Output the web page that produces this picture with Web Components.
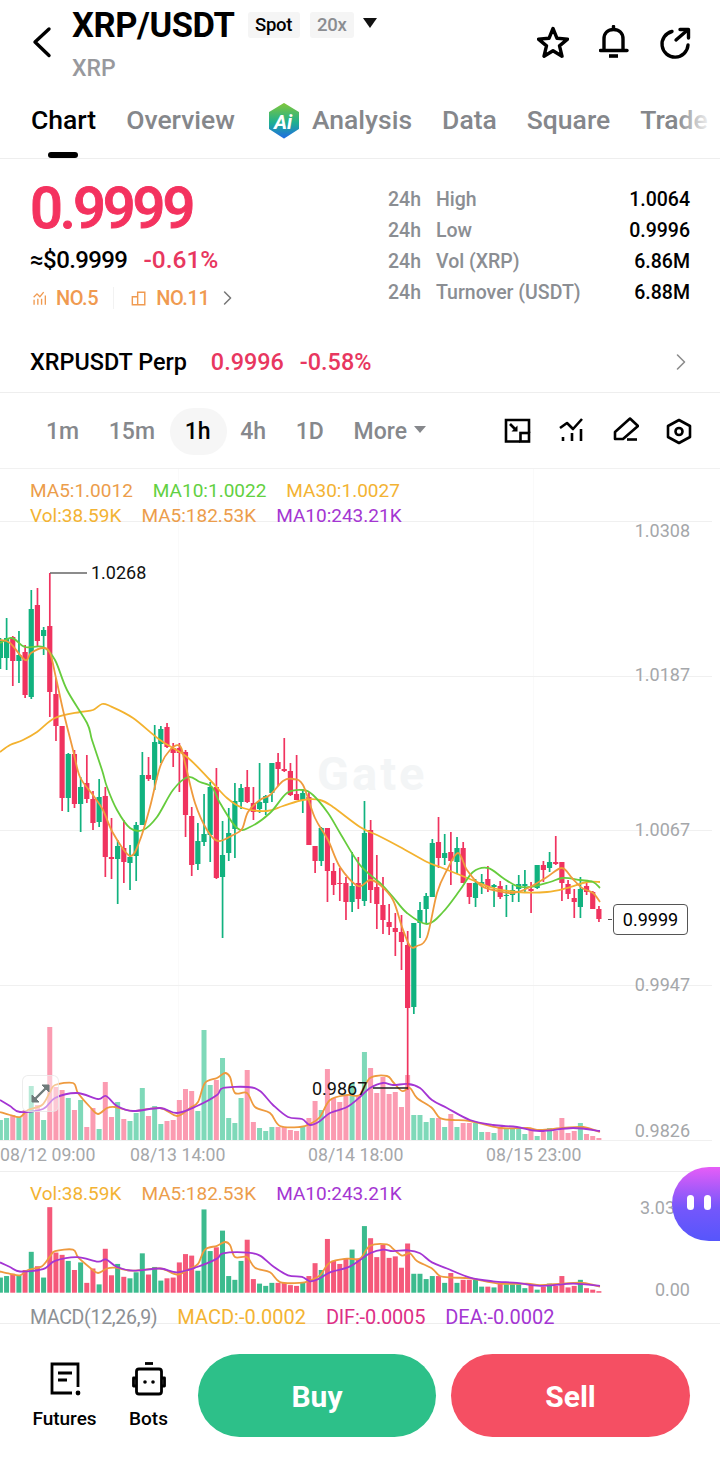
<!DOCTYPE html>
<html lang="en">
<head>
<meta charset="utf-8">
<title>XRP/USDT</title>
<style>
  html, body { margin: 0; padding: 0; background: #fff; }
  body { width: 720px; height: 1467px; overflow: hidden; font-family: Roboto, "Noto Sans", sans-serif; color: #000; position: relative; }
</style>
</head>
<body>
<app-header></app-header>
<tab-bar></tab-bar>
<price-panel></price-panel>
<perp-row></perp-row>
<time-bar></time-bar>
<kline-main></kline-main>
<kline-sub></kline-sub>
<bottom-bar></bottom-bar>
<chat-bubble></chat-bubble>

<script>
// Candles read off the reference: colour, wick top, body top, body bottom, wick bottom (page y)
const CANDLES = `g 638 640 658 669|g 618 638 658 670|r 636 637 661 686|g 631 655 661 683|r 645 652 695 698|g 590 609 697 699|r 588 605 641 647|g 627 630 636 655|r 573 626 692 717|r 678 694 726 741|r 726 726 798 811|g 753 754 798 812|r 750 754 804 808|g 777 787 804 832|r 755 783 799 803|r 791 799 823 830|g 779 797 822 827|r 787 796 857 877|r 818 857 859 879|g 840 846 859 904|r 820 848 862 883|g 845 857 863 890|g 822 825 856 881|g 752 775 825 825|r 757 775 779 781|g 725 742 780 790|g 726 729 744 763|r 723 727 747 748|r 743 748 753 767|r 743 748 753 792|r 750 752 815 837|r 807 816 865 876|g 823 841 864 870|g 794 834 842 846|g 782 787 835 862|r 768 787 878 879|g 821 855 877 938|g 808 833 853 861|g 783 801 829 858|g 784 788 802 809|r 770 787 802 803|r 787 803 812 820|g 763 802 809 813|g 795 796 803 815|g 763 763 793 802|r 753 762 769 786|r 738 769 771 772|r 763 771 795 796|r 755 794 800 800|g 790 793 800 813|r 792 797 845 845|r 846 846 861 873|g 827 828 861 866|r 828 828 871 902|r 863 871 885 895|r 868 883 884 901|r 877 883 902 920|g 852 886 902 912|r 857 883 899 909|g 801 833 901 906|r 820 830 890 903|r 855 887 904 929|r 877 905 920 934|r 904 922 927 935|r 913 928 932 956|r 915 932 942 970|r 931 945 1008 1090|g 923 923 1007 1014|g 902 910 923 938|g 893 896 909 923|g 839 843 897 897|r 817 842 858 868|g 834 853 858 865|r 832 852 861 885|g 837 848 862 874|r 842 848 883 883|r 883 883 897 904|g 879 883 898 907|g 874 882 885 894|r 866 879 887 892|g 884 885 887 907|r 881 886 897 899|g 885 895 896 917|g 885 890 895 902|g 875 884 889 902|g 870 884 886 893|r 882 889 891 913|g 865 865 888 889|r 861 865 870 882|g 852 862 868 872|r 836 862 864 865|r 862 862 883 901|r 880 884 894 899|r 889 898 902 918|g 877 889 907 918|r 880 886 892 895|r 891 892 909 909|r 906 909 919 922`
  .split('|').map(s => { const [c, ...v] = s.split(' '); return { c, wt: +v[0], bt: +v[1], bb: +v[2], wb: +v[3] }; });

const VOLUMES = [20,22,25,23,30,54,35,20,113,53,50,42,30,40,13,32,11,58,23,38,21,19,27,52,24,34,16,19,20,40,51,49,29,110,55,60,82,22,17,42,70,18,12,9,13,13,13,10,9,14,22,39,30,71,42,38,45,57,45,88,72,47,63,46,48,33,65,25,25,18,22,22,13,26,13,17,17,17,8,8,7,13,11,11,11,6,10,4,8,12,9,22,7,9,17,6,4,2];

const MA5 = [[0,640],[10,643],[25,660],[31,653],[43,648],[50,653],[56,678],[63,710],[73,750],[80,777],[93,795],[103,810],[113,833],[130,856],[140,840],[150,807],[160,767],[170,750],[180,746],[185,763],[195,803],[207,830],[218,841],[233,835],[242,829],[248,812],[260,800],[270,795],[283,781],[293,779],[303,785],[315,818],[328,840],[340,867],[358,886],[370,880],[380,885],[393,900],[402,927],[410,946],[417,946],[427,937],[437,893],[447,870],[458,853],[467,870],[480,885],[493,890],[513,893],[530,887],[547,877],[562,868],[572,878],[582,888],[593,893],[600,902]];
const MA10 = [[0,643],[12,638],[25,647],[43,647],[55,660],[67,690],[87,723],[92,740],[102,770],[107,787],[117,810],[130,828],[143,830],[157,817],[173,790],[188,777],[200,782],[212,787],[220,803],[237,828],[250,827],[270,813],[287,793],[303,790],[313,795],[328,813],[340,833],[360,865],[380,883],[393,897],[407,913],[427,924],[443,912],[460,890],[473,872],[488,868],[503,878],[517,886],[530,887],[550,882],[563,878],[580,880],[593,882],[600,888]];
const MA30 = [[0,752],[10,745],[23,740],[37,732],[55,718],[80,712],[93,710],[102,704],[110,706],[133,718],[160,740],[187,757],[210,780],[227,798],[243,808],[267,811],[283,806],[303,800],[320,800],[333,807],[360,827],[377,835],[400,847],[427,862],[440,867],[460,875],[477,882],[493,888],[517,892],[547,892],[567,888],[587,882],[600,882]];
const VOL_MA5 = [[0,1112],[10,1115],[20,1117],[28,1110],[42,1105],[50,1092],[55,1085],[73,1083],[78,1093],[90,1107],[98,1114],[107,1108],[115,1107],[133,1111],[160,1108],[177,1116],[190,1108],[198,1102],[205,1083],[217,1078],[225,1073],[230,1077],[235,1093],[247,1093],[255,1107],[270,1113],[280,1126],[300,1127],[310,1124],[320,1117],[330,1100],[347,1095],[360,1095],[370,1078],[387,1076],[393,1082],[402,1091],[410,1088],[417,1098],[432,1108],[440,1118],[453,1120],[470,1121],[500,1128],[527,1128],[540,1130],[563,1128],[583,1127],[600,1132]];
const VOL_MA10 = [[0,1100],[10,1106],[20,1112],[43,1109],[55,1098],[77,1093],[98,1099],[106,1096],[117,1106],[133,1111],[160,1108],[177,1113],[197,1106],[217,1095],[223,1088],[248,1087],[260,1091],[273,1105],[288,1117],[302,1119],[310,1125],[320,1121],[330,1113],[347,1107],[360,1097],[370,1088],[383,1083],[393,1085],[408,1084],[420,1088],[432,1100],[447,1108],[470,1120],[493,1125],[517,1127],[540,1131],[573,1128],[600,1131]];

const candleX = i => 0.4 + i * 6.17;

// smooth line through the points (catmull-rom to bezier)
function smooth(pts) {
  let d = `M${pts[0][0]} ${pts[0][1]}`;
  for (let i = 0; i < pts.length - 1; i++) {
    const p0 = pts[i - 1] || pts[i], p1 = pts[i], p2 = pts[i + 1], p3 = pts[i + 2] || p2;
    const c1x = p1[0] + (p2[0] - p0[0]) / 6, c1y = p1[1] + (p2[1] - p0[1]) / 6;
    const c2x = p2[0] - (p3[0] - p1[0]) / 6, c2y = p2[1] - (p3[1] - p1[1]) / 6;
    d += `C${c1x.toFixed(1)} ${c1y.toFixed(1)} ${c2x.toFixed(1)} ${c2y.toFixed(1)} ${p2[0]} ${p2[1]}`;
  }
  return d;
}
const line = (pts, color, w = 1.8) => `<path d="${smooth(pts)}" fill="none" stroke="${color}" stroke-width="${w}" stroke-linejoin="round"/>`;

class AppHeader extends HTMLElement {
  constructor() {
    super();
    this.attachShadow({ mode: 'open' }).innerHTML = `
      <style>
        :host { display: flex; height: 92px; box-sizing: border-box; padding: 0 29px 0 31px; align-items: flex-start; }
        .back { width: 24px; height: 34px; margin: 25px 17px 0 0; flex: none; }
        .info { flex: 1; padding-top: 5px; }
        .top { display: flex; align-items: center; height: 40px; }
        h1 { margin: 0; font-size: 34.500px; line-height: 40px; font-weight: 700; letter-spacing: -0.4px; }
        .chip { height: 26px; line-height: 26px; padding: 0 7.500px; margin-left: 10px; background: #f5f5f5; border-radius: 3px; font-size: 18.500px; font-weight: 500; letter-spacing: -0.3px; }
        .chip.spot { margin-left: 13px; }
        .chip.lev { color: #8b8d91; }
        .caret { margin-left: 9px; width: 0; height: 0; border-left: 7px solid transparent; border-right: 7px solid transparent; border-top: 10px solid #111; margin-top: -4px; }
        .sub { margin-top: 10px; font-size: 23px; line-height: 28px; font-weight: 500; color: #98999d; }
        .tools { display: flex; gap: 30px; padding-top: 25px; }
        svg { display: block; }
      </style>
      <svg class="back" viewBox="0 0 24 34" fill="none" stroke="#000" stroke-width="3.400" stroke-linecap="round" stroke-linejoin="round"><path d="M18 4 4 17l14 13.500"/></svg>
      <div class="info">
        <div class="top">
          <h1>XRP/USDT</h1>
          <span class="chip spot">Spot</span>
          <span class="chip lev">20x</span>
          <span class="caret"></span>
        </div>
        <div class="sub">XRP</div>
      </div>
      <div class="tools">
        <svg width="32" height="36" viewBox="0 0 32 36" fill="none" stroke="#000" stroke-width="3.400" stroke-linejoin="round"><path d="m16 3.500 4 9.800 10.500.8-8 6.800 2.500 10.300-9-5.500-9 5.500 2.500-10.300-8-6.800 10.500-.8z"/></svg>
        <svg width="30" height="36" viewBox="0 0 30 36" fill="none" stroke="#000" stroke-width="3.400" stroke-linecap="round" stroke-linejoin="round"><path d="M5 25V14C5 8 9 4.500 14.500 4.500S24 8 24 14v11"/><path d="M1.500 25.500H28"/><path d="M14.500 1.500v2"/><path d="M10 31h9" stroke-width="3.600" stroke-linecap="butt"/></svg>
        <svg width="32" height="36" viewBox="0 0 32 36" fill="none" stroke="#000" stroke-width="3.400" stroke-linecap="round" stroke-linejoin="round"><path d="M13 6.500A13 13 0 1 0 29 20"/><path d="M17 15 28 5.500"/><path d="M21 4.500h8.500V13"/></svg>
      </div>`;
  }
}

class TabBar extends HTMLElement {
  constructor() {
    super();
    this.attachShadow({ mode: 'open' }).innerHTML = `
      <style>
        :host { display: flex; position: relative; height: 67px; box-sizing: border-box; border-bottom: 1px solid #eeeeee; padding-left: 31px; gap: 30px; overflow: hidden; white-space: nowrap; }
        span { font-size: 26.500px; line-height: 56px; font-weight: 500; color: #85878b; }
        .on { color: #000; position: relative; }
        .on::after { content: ""; position: absolute; left: 17px; bottom: 0; width: 30px; height: 6px; background: #000; border-radius: 3px; }
        .ai { display: flex; align-items: flex-start; gap: 12px; margin-left: 3px; }
        .ai svg { margin-top: 11px; }
        .fade { position: absolute; right: 0; top: 0; bottom: 0; width: 44px; background: linear-gradient(to right, rgba(255,255,255,0), #fff 85%); }
      </style>
      <span class="on">Chart</span>
      <span>Overview</span>
      <span class="ai">
        <svg width="32" height="36" viewBox="0 0 32 36">
          <defs><linearGradient id="ai" x1="0" y1="0" x2="0" y2="1"><stop offset="0" stop-color="#7cc63e"/><stop offset=".55" stop-color="#1fb08f"/><stop offset="1" stop-color="#1f6fe0"/></linearGradient></defs>
          <path d="M16 1 30 9.500v16L16 34.500 2 25.500v-16z" fill="url(#ai)" stroke="url(#ai)" stroke-width="2" stroke-linejoin="round"/>
          <text x="15" y="26" text-anchor="middle" font-family="Roboto" font-weight="700" font-style="italic" font-size="20" fill="#fff">Ai</text>
        </svg>
        <span>Analysis</span>
      </span>
      <span>Data</span>
      <span>Square</span>
      <span>Trade</span>
      <div class="fade"></div>`;
  }
}

class PricePanel extends HTMLElement {
  constructor() {
    super();
    const rows = [['High', '1.0064'], ['Low', '0.9996'], ['Vol (XRP)', '6.86M'], ['Turnover (USDT)', '6.88M']];
    this.attachShadow({ mode: 'open' }).innerHTML = `
      <style>
        :host { display: flex; justify-content: space-between; height: 162px; box-sizing: border-box; padding: 20px 30px 0; }
        .price { font-size: 58px; line-height: 58px; font-weight: 500; color: #f4325f; letter-spacing: -3.100px; -webkit-text-stroke: .9px #f4325f; }
        .sub { display: flex; gap: 16px; margin-top: 9px; font-size: 24px; line-height: 28px; font-weight: 500; letter-spacing: -0.6px; }
        .sub b { font-weight: 500; color: #e8375f; font-size: 24.500px; letter-spacing: 0; }
        .rank { display: flex; align-items: center; margin-top: 11px; font-size: 20px; line-height: 26px; font-weight: 500; color: #f09a50; letter-spacing: -0.4px; }
        .rank svg { display: block; margin: 0 9px 0 2px; }
        .sep { width: 1px; height: 22px; background: #f2f2f2; margin: 0 15px; }
        .stats { display: grid; grid-template-columns: 48px 1fr auto; width: 302px; grid-auto-rows: 31px; align-items: center; font-size: 19.500px; font-weight: 500; color: #8b8e93; margin-top: 5px; }
        .stats i { font-style: normal; color: #000; text-align: right; }
      </style>
      <div>
        <div class="price">0.9999</div>
        <div class="sub"><span>≈$0.9999</span><b>-0.61%</b></div>
        <div class="rank">
          <svg width="15" height="16" viewBox="0 0 18 18" fill="none" stroke="#f09a50" stroke-width="1.600"><path d="M2 8 6 4l3.500 3.500L14 2"/><path d="M2.500 11v6M7 10v7M11.500 10v7M16 6v11"/></svg>
          NO.5
          <span class="sep"></span>
          <svg width="16" height="16" viewBox="0 0 18 18" fill="none" stroke="#f09a50" stroke-width="1.600"><path d="M1.500 7.500h6v9h-6zM7.500 16.500v-14h8v14z"/></svg>
          NO.11
          <svg width="12" height="18" viewBox="0 0 14 18" fill="none" stroke="#777" stroke-width="1.800" stroke-linecap="round" stroke-linejoin="round" style="margin:0 0 0 13px"><path d="M3 2l7 7-7 7"/></svg>
        </div>
      </div>
      <div class="stats">
        ${rows.map(r => `<span>24h</span><span>${r[0]}</span><i>${r[1]}</i>`).join('')}
      </div>`;
  }
}

class PerpRow extends HTMLElement {
  constructor() {
    super();
    this.attachShadow({ mode: 'open' }).innerHTML = `
      <style>
        :host { display: flex; align-items: center; height: 72px; box-sizing: border-box; padding: 10px 33px 0 30px; border-bottom: 1px solid #eeeeee; font-size: 23.400px; font-weight: 500; }
        b { font-weight: 500; color: #e8375f; font-size: 23.400px; }
        .price { margin-left: 24px; }
        .chg { margin-left: 16px; flex: 1; }
      </style>
      <span>XRPUSDT Perp</span>
      <b class="price">0.9996</b>
      <b class="chg">-0.58%</b>
      <svg width="12" height="18" viewBox="0 0 12 18" fill="none" stroke="#8c8c8c" stroke-width="1.600" stroke-linecap="round" stroke-linejoin="round"><path d="M2.500 2l7 7-7 7"/></svg>`;
  }
}

class TimeBar extends HTMLElement {
  constructor() {
    super();
    this.attachShadow({ mode: 'open' }).innerHTML = `
      <style>
        :host { display: flex; align-items: center; height: 76px; box-sizing: border-box; padding: 0 28px 0 46px; border-bottom: 1px solid #f1f1f1; font-size: 23px; font-weight: 500; color: #86888c; }
        .tf { display: flex; align-items: center; gap: 29.700px; flex: 1; padding-top: 1px; }
        .on { position: relative; color: #000; z-index: 0; }
        .on::before { content: ""; position: absolute; z-index: -1; left: -15px; right: -16px; top: -10px; bottom: -10px; background: #f6f6f6; border-radius: 24px; }
        .more { display: flex; align-items: center; gap: 7px; }
        .more::after { content: ""; border-left: 6px solid transparent; border-right: 6px solid transparent; border-top: 7px solid #86888c; margin-top: -3px; }
        .tools { display: flex; gap: 27px; }
        svg { display: block; }
      </style>
      <div class="tf"><span>1m</span><span>15m</span><span class="on">1h</span><span>4h</span><span>1D</span><span class="more">More</span></div>
      <div class="tools">
        <svg width="27" height="28" viewBox="0 0 27 28" fill="none" stroke="#000" stroke-width="2.600"><path d="M25 16V3H2v21.500h14"/><rect x="16.500" y="16" width="8.500" height="8.500"/><path d="M6 7l5 5"/><path d="M13.500 14.500H7.500l6-6z" fill="#000" stroke="none"/></svg>
        <svg width="27" height="28" viewBox="0 0 27 28" fill="none" stroke="#000" stroke-width="2.600" stroke-linejoin="round"><path d="M2 11 9 6l6 6 9-10"/><path d="M5 20v4M14 16v8M23 12v12"/></svg>
        <svg width="27" height="28" viewBox="0 0 27 28" fill="none" stroke="#000" stroke-width="2.600" stroke-linejoin="round"><path d="M3 22v-7L18 1.500 26 9 11 22z"/><path d="M15 22.500h10"/></svg>
        <svg width="26" height="28" viewBox="0 0 26 28" fill="none" stroke="#000" stroke-width="2.600" stroke-linejoin="round"><path d="M13 3 24 9v11l-11 6-11-6V9z"/><circle cx="13" cy="14.500" r="3.500"/></svg>
      </div>`;
  }
}

const legendStyle = `
  .legend { display: flex; gap: 20px; font-size: 19px; line-height: 25px; padding-left: 30px; white-space: nowrap; position: relative; }
  .or { color: #ec9d4b; } .gr { color: #62d041; } .ye { color: #f3b333; } .pu { color: #a436d2; } .gy { color: #8d9095; } .pk { color: #dd2f86; }
  svg { position: absolute; left: 0; top: 0; }
  text { font-family: Roboto, sans-serif; }
`;

class KlineMain extends HTMLElement {
  constructor() {
    super();
    let bars = '', candles = '';
    CANDLES.forEach((k, i) => {
      const x = candleX(i), red = k.c === 'r';
      const col = red ? '#f0335f' : '#11b27f';
      candles += `<rect x="${x - .8}" y="${k.wt}" width="1.700" height="${k.wb - k.wt}" fill="${col}"/>`;
      candles += `<rect x="${x - 2.600}" y="${k.bt}" width="5.200" height="${Math.max(k.bb - k.bt, 1)}" fill="${col}"/>`;
      const h = VOLUMES[i];
      bars += `<rect x="${x - 2.500}" y="${1140 - h}" width="5" height="${h}" fill="${red ? '#fb9bb1' : '#7fd9b9'}"/>`;
    });
    const grid = [521, 676, 830, 985, 1140].map(y => `<path d="M0 ${y + .5}H712" stroke="#f0f0f0"/>`).join('');
    const axis = [['1.0308', 537], ['1.0187', 681], ['1.0067', 836], ['0.9947', 991], ['0.9826', 1137]]
      .map(a => `<text x="690" y="${a[1]}" text-anchor="end" font-size="18" fill="#a5a7aa">${a[0]}</text>`).join('');
    const dates = [['08/12 09:00', 0], ['08/13 14:00', 130], ['08/14 18:00', 308], ['08/15 23:00', 486]]
      .map(a => `<text x="${a[1]}" y="1161" font-size="17.700" fill="#a5a7aa">${a[0]}</text>`).join('');
    this.attachShadow({ mode: 'open' }).innerHTML = `
      <style>
        :host { display: block; position: relative; height: 703px; box-sizing: border-box; padding-top: 9px; border-bottom: 1px solid #eeeeee; }
        ${legendStyle}
        .tag { position: absolute; left: 613px; top: 435px; width: 75px; height: 31px; box-sizing: border-box; border: 1px solid #555; border-radius: 4px; background: #fff; text-align: center; font-size: 18px; line-height: 29px; }
        .zoom { position: absolute; left: 22px; top: 606px; width: 37px; height: 37px; box-sizing: border-box; border: 1px solid rgba(230,230,230,.7); border-radius: 6px; background: rgba(255,255,255,.45); }
      </style>
      <svg width="720" height="703" viewBox="0 469 720 703">
        <path d="M178.500 469V1140M533.500 469V1140" stroke="#fafafa"/>
        ${grid}
        <text x="317" y="790" font-size="47" font-weight="700" fill="#f3f5f6" letter-spacing="3">Gate</text>
        ${bars}
        ${line(VOL_MA5, '#ee9a3e')}
        ${line(VOL_MA10, '#a435d3')}
        ${candles}
        ${line(MA30, '#f3b22f')}
        ${line(MA10, '#66cc3d')}
        ${line(MA5, '#ef9a3c')}
        <path d="M50 573H87" stroke="#666" stroke-width="1.500"/>
        <text x="91" y="579" font-size="18" fill="#111">1.0268</text>
        <text x="312" y="1095" font-size="18" fill="#111">0.9867</text>
        <path d="M373 1088H408" stroke="#222" stroke-width="1.300"/>
        <path d="M608 919.500h4" stroke="#555" stroke-width="1"/>
        ${axis}
        ${dates}
      </svg>
      <div class="legend"><span class="or">MA5:1.0012</span><span class="gr">MA10:1.0022</span><span class="ye">MA30:1.0027</span></div>
      <div class="legend"><span class="ye">Vol:38.59K</span><span class="or">MA5:182.53K</span><span class="pu">MA10:243.21K</span></div>
      <div class="tag">0.9999</div>
      <div class="zoom">
        <svg width="35" height="35" viewBox="0 0 35 35" fill="#6f7b7b" stroke="#6f7b7b" stroke-width="2.400"><path d="M11 24 24 11"/><path d="M19 9h7v7z" stroke-width="1"/><path d="M9 19v7h7z" stroke-width="1"/></svg>
      </div>`;
  }
}

class KlineSub extends HTMLElement {
  constructor() {
    super();
    const base = 1292.7, k = 0.757;
    const toSub = pts => pts.map(p => [p[0], +(base - (1140 - p[1]) * k).toFixed(1)]);
    let bars = '';
    CANDLES.forEach((c, i) => {
      const h = VOLUMES[i] * k;
      bars += `<rect x="${candleX(i) - 2.500}" y="${base - h}" width="5" height="${h}" fill="${c.c === 'r' ? '#f5597a' : '#3cbb8e'}"/>`;
    });
    this.attachShadow({ mode: 'open' }).innerHTML = `
      <style>
        :host { display: block; position: relative; height: 152px; box-sizing: border-box; padding-top: 9px; border-bottom: 1px solid #eeeeee; }
        ${legendStyle}
        .legend.macd { margin-top: 99px; gap: 20px; font-size: 20px; }
        .legend.macd .gy { font-size: 19.500px; letter-spacing: -0.3px; }
        .legend.macd .pk { letter-spacing: -0.2px; }
      </style>
      <svg width="720" height="152" viewBox="0 1172 720 152">
        ${bars}
        ${line(toSub(VOL_MA5), '#ee9a3e')}
        ${line(toSub(VOL_MA10), '#a435d3')}
        <text x="640" y="1214" font-size="18" fill="#a5a7aa">3.03</text>
        <text x="690" y="1296" text-anchor="end" font-size="18" fill="#a5a7aa">0.00</text>
      </svg>
      <div class="legend"><span class="ye">Vol:38.59K</span><span class="or">MA5:182.53K</span><span class="pu">MA10:243.21K</span></div>
      <div class="legend macd"><span class="gy">MACD(12,26,9)</span><span class="ye">MACD:-0.0002</span><span class="pk">DIF:-0.0005</span><span class="pu">DEA:-0.0002</span></div>`;
  }
}

class BottomBar extends HTMLElement {
  constructor() {
    super();
    this.attachShadow({ mode: 'open' }).innerHTML = `
      <style>
        :host { display: flex; align-items: flex-start; height: 143px; box-sizing: border-box; padding: 30px 30px 0 32px; }
        .act { display: flex; flex-direction: column; align-items: center; margin-top: 7px; font-size: 19px; line-height: 24px; font-weight: 500; }
        .act svg { display: block; margin-bottom: 10px; }
        .fut { width: 65px; margin-right: 32px; }
        .bot { width: 39px; margin-right: 30px; }
        .btn { flex: none; height: 83px; border-radius: 42px; color: #fff; font-size: 30px; font-weight: 700; line-height: 86px; text-align: center; }
        .buy { width: 238px; background: #2dc089; }
        .sell { width: 239px; margin-left: 15px; background: #f54f63; }
      </style>
      <div class="act fut">
        <svg width="34" height="36" viewBox="0 0 34 36" fill="none" stroke="#000" stroke-width="2.800"><path d="M24 32H4V3h26v23"/><path d="M10 12h14M10 19h9"/><circle cx="30" cy="32" r="2.400" fill="#000" stroke="none"/></svg>
        Futures
      </div>
      <div class="act bot">
        <svg width="34" height="36" viewBox="0 0 34 36" fill="none" stroke="#000" stroke-width="2.800" stroke-linejoin="round"><path d="M13 2.500h8"/><rect x="4.500" y="8" width="25" height="25" rx="2.500"/><path d="M4 17H1.500v8H4M30 17h2.500v8H30"/><circle cx="13" cy="21" r="1.800" fill="#000" stroke="none"/><circle cx="21" cy="21" r="1.800" fill="#000" stroke="none"/></svg>
        Bots
      </div>
      <div class="btn buy">Buy</div>
      <div class="btn sell">Sell</div>`;
  }
}

class ChatBubble extends HTMLElement {
  constructor() {
    super();
    this.attachShadow({ mode: 'open' }).innerHTML = `
      <style>
        :host { position: absolute; left: 672px; top: 1167px; width: 48px; height: 74px; display: flex; gap: 10px; padding: 28px 0 0 15px; box-sizing: border-box; border-radius: 37px 0 0 37px; background: linear-gradient(to bottom, #e65df7, #7557fb 55%, #5656fb); }
        i { display: block; width: 7px; height: 15px; background: #fff; border-radius: 4px; }
      </style>
      <i></i><i></i>`;
  }
}

customElements.define('app-header', AppHeader);
customElements.define('tab-bar', TabBar);
customElements.define('price-panel', PricePanel);
customElements.define('perp-row', PerpRow);
customElements.define('time-bar', TimeBar);
customElements.define('kline-main', KlineMain);
customElements.define('kline-sub', KlineSub);
customElements.define('bottom-bar', BottomBar);
customElements.define('chat-bubble', ChatBubble);
</script>
</body>
</html>
